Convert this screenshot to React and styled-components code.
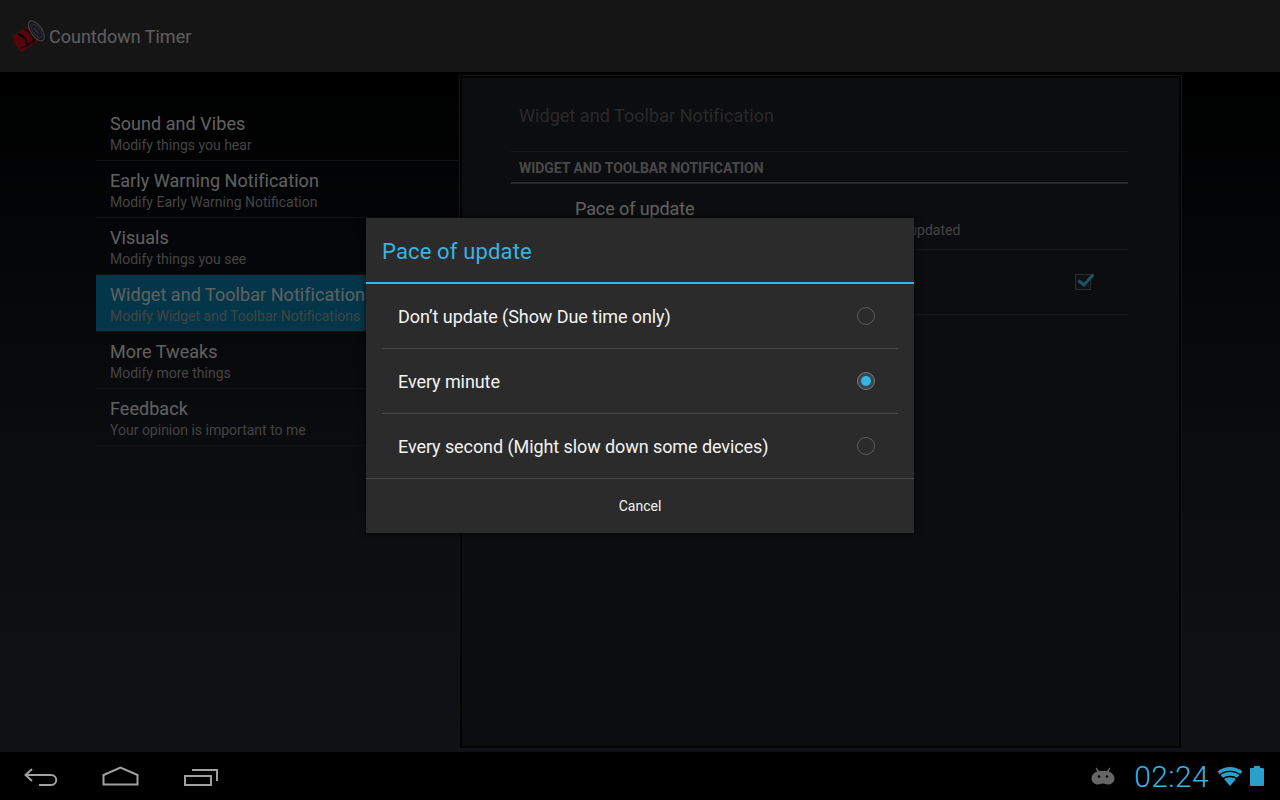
import React from 'react'
import styled, { createGlobalStyle } from 'styled-components'

const GlobalStyle = createGlobalStyle`
    html, body {
        margin: 0;
        padding: 0;
        height: 100%;
        background: #000;
        font-family: Roboto, "Liberation Sans", sans-serif;
    }
    * {
        box-sizing: border-box;
    }
`

//page shell
const Screen = styled.div`
    width: 1280px;
    height: 800px;
    display: flex;
    flex-direction: column;
    overflow: hidden;
`

const Activity = styled.div`
    position: relative;
    flex: 1;
    display: flex;
    flex-direction: column;
    min-height: 0;
`

const ActionBar = styled.header`
    height: 72px;
    flex-shrink: 0;
    display: flex;
    align-items: center;
    padding-left: 13px;
    gap: 4px;
    background: #363636;
`

const AppTitle = styled.h1`
    margin: 0;
    font-size: 18px;
    font-weight: 400;
    color: #e8e8e8;
`

const Content = styled.main`
    flex: 1;
    display: flex;
    padding-left: 96px;
    padding-right: 98px;
    background: linear-gradient(180deg, #000 0%, #0c0f12 25%, #1c2126 60%, #272c32 100%);
`

//headers list
const HeaderList = styled.nav`
    width: 363px;
    flex-shrink: 0;
    padding-top: 32px;
`

const HeaderItem = styled.div`
    height: 57px;
    padding: 8px 0 0 14px;
    white-space: nowrap;
    overflow: hidden;
    border-bottom: 1px solid #2c2c2c;
    background: ${props => (props.$active ? '#0887b4' : 'transparent')};
`

const HeaderTitle = styled.div`
    font-size: 18px;
    line-height: 24px;
    color: #f0f0f0;
    letter-spacing: 0.05px;
`

const HeaderSummary = styled.div`
    font-size: 14px;
    line-height: 18px;
    color: #a8a8a8;
`

//preference panel
const PanelFrame = styled.section`
    flex: 1;
    margin: 3px 0;
    padding: 2px;
    border: 1px solid #343434;
    background: #080808;
    display: flex;
`

const Panel = styled.div`
    flex: 1;
    padding: 0 51px 0 49px;
    background: #202226;
`

const PanelHeading = styled.div`
    height: 74px;
    padding: 2px 0 0 8px;
    display: flex;
    align-items: center;
    font-size: 18px;
    color: #666;
    letter-spacing: 0.05px;
    border-bottom: 1px solid #3a3c3e;
`

const SectionLabel = styled.div`
    height: 32px;
    padding: 1px 0 0 8px;
    display: flex;
    align-items: center;
    font-size: 14px;
    font-weight: 700;
    color: #b4b4b4;
    letter-spacing: -0.05px;
    text-transform: uppercase;
    border-bottom: 2px solid #6a6a6a;
`

const PrefRow = styled.div`
    height: ${props => (props.$tall ? '66px' : '65px')};
    padding-left: 64px;
    padding-right: 37px;
    padding-top: ${props => (props.$tall ? '2px' : '0')};
    display: flex;
    align-items: center;
    justify-content: space-between;
    border-bottom: 1px solid #3a3c3e;
`

const PrefTitle = styled.div`
    font-size: 18px;
    line-height: 24px;
    color: #f0f0f0;
    letter-spacing: -0.1px;
`

const PrefSummary = styled.div`
    font-size: 14px;
    line-height: 18px;
    color: #a8a8a8;
`

const CheckBox = styled.div`
    position: relative;
    width: 16px;
    height: 16px;
    border: 1px solid #6a6e72;
    background: #2a2c30;

    svg {
        position: absolute;
        left: -1px;
        top: -2px;
        overflow: visible;
    }
`

//dialog
const Scrim = styled.div`
    position: absolute;
    inset: 0;
    padding-bottom: 1px;
    background: rgba(0, 0, 0, 0.6);
    display: flex;
    align-items: center;
    justify-content: center;
`

const Dialog = styled.div`
    width: 548px;
    height: 315px;
    display: flex;
    flex-direction: column;
    background: #2b2b2b;
    box-shadow: 0 0 6px rgba(0, 0, 0, 0.7);
`

const DialogTitle = styled.div`
    height: 66px;
    flex-shrink: 0;
    padding: 3px 0 0 16px;
    display: flex;
    align-items: center;
    font-size: 22px;
    color: #33b5e5;
    letter-spacing: 0.15px;
    border-bottom: 2px solid #33b5e5;
`

const Options = styled.div`
    padding: 0 16px;
`

const Option = styled.div`
    height: ${props => (props.$last ? '64px' : '65px')};
    padding: 0 23px 0 16px;
    display: flex;
    align-items: center;
    justify-content: space-between;
    font-size: 18px;
    color: #f3f3f3;
    letter-spacing: -0.08px;
    border-bottom: ${props => (props.$last ? 'none' : '1px solid #4a4a4a')};
`

const Radio = styled.span`
    position: relative;
    width: 18px;
    height: 18px;
    border-radius: 50%;
    border: 1px solid ${props => (props.$checked ? '#777' : '#5c5c5c')};
    background: ${props => (props.$checked ? '#3d4448' : 'transparent')};
    display: flex;
    align-items: center;
    justify-content: center;

    &::after {
        content: '';
        display: ${props => (props.$checked ? 'block' : 'none')};
        width: 10px;
        height: 10px;
        border-radius: 50%;
        background: #33b5e5;
    }
`

const CancelButton = styled.div`
    flex: 1;
    display: flex;
    align-items: center;
    justify-content: center;
    font-size: 14px;
    color: #f3f3f3;
    border-top: 1px solid #4a4a4a;
`

//system bar
const SystemBar = styled.footer`
    height: 48px;
    flex-shrink: 0;
    display: flex;
    align-items: center;
    justify-content: space-between;
    padding: 0 16px 0 24px;
    background: #000;
`

const NavButtons = styled.div`
    display: flex;
    align-items: center;
    gap: 44px;
`

const StatusArea = styled.div`
    display: flex;
    align-items: center;
`

const Clock = styled.span`
    margin: 0 8px 0 19px;
    font-size: 30px;
    font-weight: 300;
    letter-spacing: 0.4px;
    color: #33b5e5;
`

const BatteryWrap = styled.span`
    display: flex;
    margin-left: 7px;
`

const AppIcon = () => (
    <svg width="32" height="32" viewBox="0 0 32 32">
        <g transform="rotate(-35 16 16)">
            <rect x="0" y="6" width="27" height="20" rx="3" fill="#3a3a3a" />
            <path d="M1 7h23v18H1c-1.500-3-1.500-15 0-18z" fill="#d0121e" />
            <path d="M8 8c4 4 4 12 0 16M16 8c4 4 4 12 0 16" stroke="#30060a" strokeWidth="2" fill="none" />
            <path d="M2 21c5 2 12 2 19 1" stroke="#30060a" strokeWidth="1.500" fill="none" />
            <ellipse cx="25" cy="16" rx="5.500" ry="11.500" fill="#343a40" stroke="#a0a4a8" strokeWidth="1.200" />
            <ellipse cx="25" cy="16" rx="3.500" ry="8" fill="#282c32" stroke="#787c82" strokeWidth="1" />
            <path d="M25 9v14M22 16h6M23 11l4 10M27 11l-4 10" stroke="#80848a" strokeWidth="0.600" />
        </g>
    </svg>
)

const BackIcon = () => (
    <svg width="34" height="20" viewBox="0 0 34 20" fill="none" stroke="#a0a0a0" strokeWidth="2">
        <path d="M8 3 1.500 9 8 15" />
        <path d="M2 9h25c7 0 7 10 0 10H15" />
    </svg>
)

const HomeIcon = () => (
    <svg width="38" height="20" viewBox="0 0 38 20" fill="none" stroke="#a0a0a0" strokeWidth="2">
        <path d="M1.500 18.500V9L18.500 1.500 35.500 9v9.500z" />
    </svg>
)

const RecentIcon = () => (
    <svg width="35" height="20" viewBox="0 0 35 20" fill="none" stroke="#a0a0a0" strokeWidth="2">
        <rect x="1" y="10" width="26" height="9" />
        <path d="M8 4h25v11" />
    </svg>
)

const AndroidIcon = () => (
    <svg width="24" height="18" viewBox="0 0 24 18">
        <path d="M5.500 0.500 8 4h8l2.500-3.500 1 .6L17.800 4.600C21 5.500 23.500 8.500 23.500 11.500c0 3.500-3 6-6.500 6-2 0-3-1-5-1s-3 1-5 1c-3.500 0-6.500-2.500-6.500-6 0-3 2.500-6 5.700-6.900L4.500 1.100z" fill="#666" />
        <circle cx="8" cy="9.500" r="1.200" fill="#000" />
        <circle cx="16" cy="9.500" r="1.200" fill="#000" />
    </svg>
)

const WifiIcon = () => (
    <svg width="26" height="21" viewBox="0 0 26 21">
        <path d="M13 20 0.500 5.500C7-0.500 19-0.500 25.500 5.500z" fill="#2a9fcb" />
        <g fill="none" stroke="#000" strokeWidth="1.300">
            <path d="M2 9.500C8 4 18 4 24 9.500" />
            <path d="M5 13.500C9.500 9.500 16.500 9.500 21 13.500" />
        </g>
    </svg>
)

const BatteryIcon = () => (
    <svg width="14" height="20" viewBox="0 0 14 20">
        <path d="M4 0h6v2h3a1 1 0 0 1 1 1v16a1 1 0 0 1-1 1H1a1 1 0 0 1-1-1V3a1 1 0 0 1 1-1h3z" fill="#2a9fcb" />
    </svg>
)

const CheckMark = () => (
    <svg width="20" height="16" viewBox="0 0 20 16" fill="none" stroke="#44d0ff" strokeWidth="3">
        <path d="M3.300 7.500 9 12 18.300 1.500" />
    </svg>
)

const headers = [
    { title: 'Sound and Vibes', summary: 'Modify things you hear' },
    { title: 'Early Warning Notification', summary: 'Modify Early Warning Notification' },
    { title: 'Visuals', summary: 'Modify things you see' },
    { title: 'Widget and Toolbar Notification', summary: 'Modify Widget and Toolbar Notifications', active: true },
    { title: 'More Tweaks', summary: 'Modify more things' },
    { title: 'Feedback', summary: 'Your opinion is important to me' },
]

const options = [
    { label: 'Don\u2019t update (Show Due time only)' },
    { label: 'Every minute', checked: true },
    { label: 'Every second (Might slow down some devices)', last: true },
]

const App = () => (
    <Screen>
        <GlobalStyle />
        <Activity>
            <ActionBar>
                <AppIcon />
                <AppTitle>Countdown Timer</AppTitle>
            </ActionBar>
            <Content>
                <HeaderList>
                    {headers.map(item => (
                        <HeaderItem key={item.title} $active={item.active}>
                            <HeaderTitle>{item.title}</HeaderTitle>
                            <HeaderSummary>{item.summary}</HeaderSummary>
                        </HeaderItem>
                    ))}
                </HeaderList>
                <PanelFrame>
                    <Panel>
                        <PanelHeading>Widget and Toolbar Notification</PanelHeading>
                        <SectionLabel>Widget and Toolbar Notification</SectionLabel>
                        <PrefRow $tall>
                            <div>
                                <PrefTitle>Pace of update</PrefTitle>
                                <PrefSummary>How often the widget and toolbar notifications will be updated</PrefSummary>
                            </div>
                        </PrefRow>
                        <PrefRow>
                            <PrefTitle>Show in toolbar</PrefTitle>
                            <CheckBox>
                                <CheckMark />
                            </CheckBox>
                        </PrefRow>
                    </Panel>
                </PanelFrame>
            </Content>
            <Scrim>
                <Dialog>
                    <DialogTitle>Pace of update</DialogTitle>
                    <Options>
                        {options.map(option => (
                            <Option key={option.label} $last={option.last}>
                                <span>{option.label}</span>
                                <Radio $checked={option.checked} />
                            </Option>
                        ))}
                    </Options>
                    <CancelButton>Cancel</CancelButton>
                </Dialog>
            </Scrim>
        </Activity>
        <SystemBar>
            <NavButtons>
                <BackIcon />
                <HomeIcon />
                <RecentIcon />
            </NavButtons>
            <StatusArea>
                <AndroidIcon />
                <Clock>02:24</Clock>
                <WifiIcon />
                <BatteryWrap>
                    <BatteryIcon />
                </BatteryWrap>
            </StatusArea>
        </SystemBar>
    </Screen>
)

export default App
